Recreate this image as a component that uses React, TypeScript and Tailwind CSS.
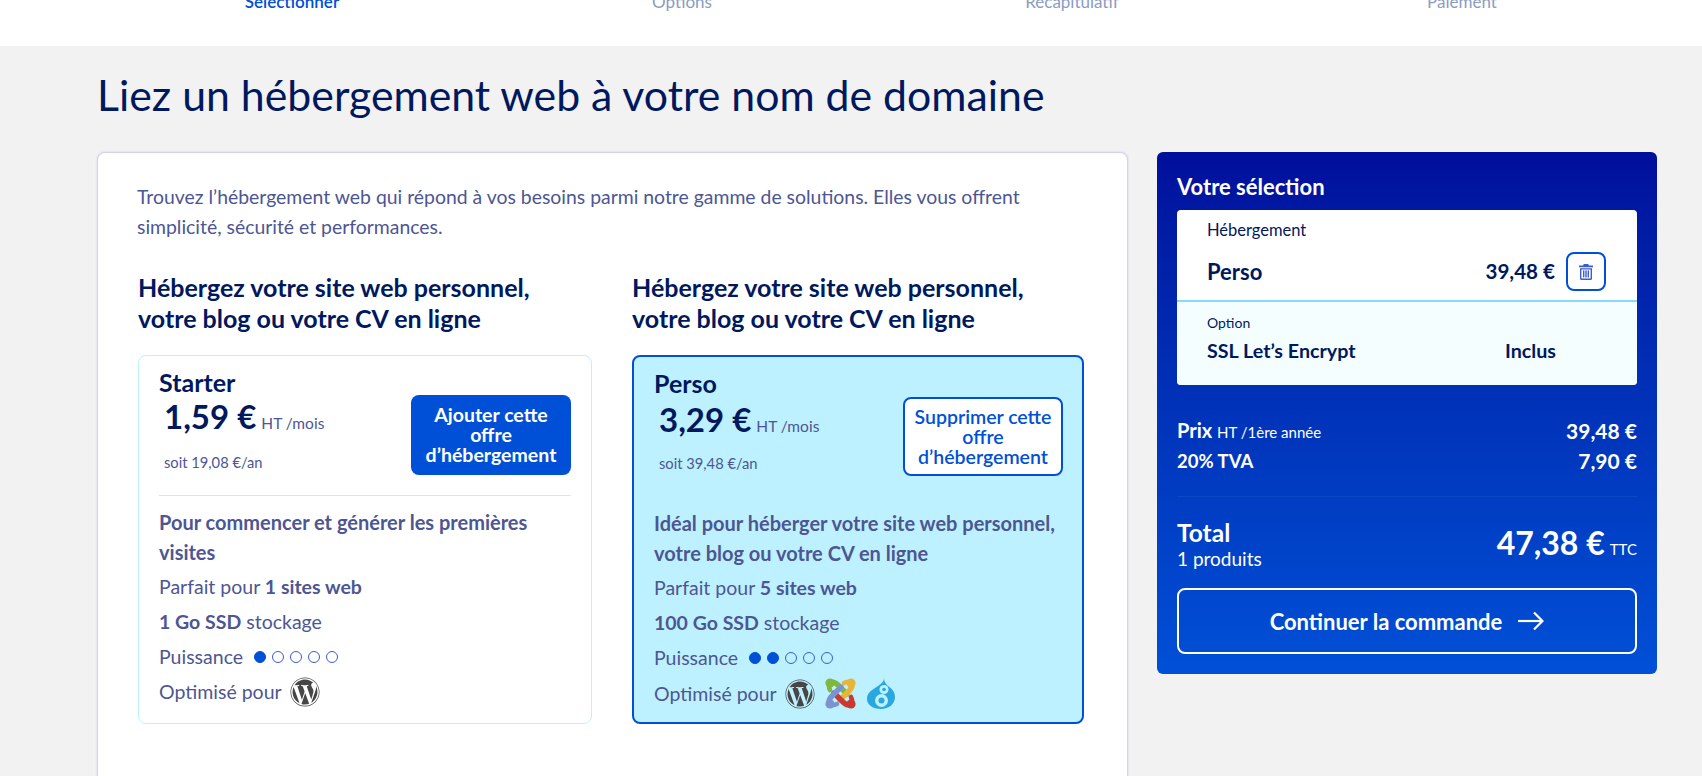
import { FaWordpress } from "react-icons/fa";

const steps = ["Sélectionner", "Options", "Récapitulatif", "Paiement"];

const WordpressIcon = () => (
  <span className="flex h-[30px] w-[30px] items-center justify-center text-[#464646]">
    <FaWordpress size={30} />
  </span>
);

const joomlaColors = ["#7eb93c", "#e8b53c", "#c93a32", "#7b93cf"];

const JoomlaIcon = () => (
  <svg width="31" height="31" viewBox="0 0 31 31" fill="none" strokeLinecap="round">
    {joomlaColors.map((color, index) => (
      <g key={color} transform={`rotate(${index * 90} 15.5 15.5)`}>
        <circle cx="5" cy="5" r="4.6" fill={color} />
        <path d="M5 5 C8 3 11 5 13 7 L22 16" stroke={color} strokeWidth="5.4" />
        <path d="M5 5 C3 8 4 10 5 12" stroke={color} strokeWidth="4.6" />
      </g>
    ))}
  </svg>
);

const DrupalIcon = () => (
  <svg width="30" height="31" viewBox="0 0 30 31">
    <path
      d="M18 0 C18 5 13 7 9 10 C4 13 1 16 1 21 C1 27 7 31 15 31 C23 31 29 26 29 19 C29 13 25 10 22 8 C20 6 18 4 18 0 Z"
      fill="#29a8df"
    />
    <circle cx="15.5" cy="22.5" r="6.5" fill="#bef1ff" />
    <circle cx="15.5" cy="22.5" r="3" fill="#29a8df" />
    <circle cx="18" cy="11.5" r="4.5" fill="#bef1ff" />
    <circle cx="18" cy="11.5" r="1.8" fill="#29a8df" />
  </svg>
);

const TrashIcon = () => (
  <svg width="14" height="16" viewBox="0 0 14 16" fill="#3d5ccf">
    <path d="M4.8 0 H9.2 L10 1.6 H14 V3.2 H0 V1.6 H4 Z" />
    <path d="M1 4.2 H13 V14.5 C13 15.4 12.4 16 11.5 16 H2.5 C1.6 16 1 15.4 1 14.5 Z M2.4 5.6 V14.6 H11.6 V5.6 Z" fillRule="evenodd" />
    <rect x="4" y="6.4" width="1.4" height="7" />
    <rect x="6.3" y="6.4" width="1.4" height="7" />
    <rect x="8.6" y="6.4" width="1.4" height="7" />
  </svg>
);

const LongArrow = () => (
  <svg width="27" height="20" viewBox="0 0 27 20" fill="none" stroke="currentColor" strokeWidth="2.2">
    <path d="M1 10 H25" />
    <path d="M17 1.5 L25.5 10 L17 18.5" />
  </svg>
);

const PowerDots = ({ level }: { level: number }) => (
  <div className="ml-[11px] flex gap-[6px]">
    {[1, 2, 3, 4, 5].map((dot) => (
      <span
        key={dot}
        className={
          dot <= level
            ? "h-3 w-3 rounded-full border border-[#0050d7] bg-[#0050d7]"
            : "h-3 w-3 rounded-full border border-[#3d5ccf] bg-transparent"
        }
      />
    ))}
  </div>
);

interface OfferProps {
  name: string;
  price: string;
  year: string;
  pitch: string;
  sites: string;
  storage: string;
  level: number;
  selected?: boolean;
}

const Offer: React.FC<OfferProps> = ({ name, price, year, pitch, sites, storage, level, selected }) => (
  <div
    className={
      selected
        ? "h-[369px] rounded-lg border-2 border-[#0050d7] bg-[#bef1ff] pl-5 pr-[19px] pt-[14px]"
        : "h-[369px] rounded-lg border border-[#bef1ff] bg-white pl-5 pr-5 pt-[14px]"
    }
  >
    <div className="text-[25px] font-bold leading-6 text-[#00185e]">{name}</div>
    <div className="flex items-start justify-between">
      <div className={selected ? "pl-[5px] pt-1" : "pl-[5px] pt-[2px]"}>
        <div className="flex items-baseline gap-[5px]">
          <span className="text-[33px] font-bold leading-10 text-[#00185e]">{price}</span>
          <span className="text-[15.5px] text-[#4d5693]">HT /mois</span>
        </div>
        <div className={selected ? "mt-[14px] text-[14.7px] leading-5 text-[#4d5693]" : "mt-4 text-[14.7px] leading-5 text-[#4d5693]"}>
          {year}
        </div>
      </div>
      <button
        className={
          selected
            ? "mt-[2px] h-[79px] w-40 rounded-lg border-2 border-[#0050d7] bg-white text-[19.5px] font-semibold leading-5 text-[#0050d7]"
            : "mt-px h-20 w-40 rounded-lg bg-[#0050d7] text-[19.5px] font-bold leading-5 text-white"
        }
      >
        {selected ? "Supprimer cette" : "Ajouter cette"}
        <br />
        offre
        <br />
        d’hébergement
      </button>
    </div>
    <div className={selected ? "mt-5 h-px" : "mt-5 h-px bg-[#bef1ff]"} />
    <div className="mt-[11px] text-[19.5px] leading-[30px] text-[#4d5693]">
      <div className="text-[20px] font-bold">{pitch}</div>
      <div className="mt-[5px]">
        Parfait pour <b>{sites}</b>
      </div>
      <div className="mt-[5px]">
        <b>{storage}</b> stockage
      </div>
      <div className="mt-[5px] flex items-center">
        Puissance
        <PowerDots level={level} />
      </div>
      <div className="mt-[5px] flex items-center">
        Optimisé pour
        <div className="ml-2 flex items-center gap-[10px]">
          <WordpressIcon />
          {selected && <JoomlaIcon />}
          {selected && <DrupalIcon />}
        </div>
      </div>
    </div>
  </div>
);

export default function App() {
  return (
    <div className="h-[776px] overflow-hidden bg-[#f2f2f2] font-['Lato',sans-serif]">
      <div className="flow-root h-[46px] bg-white pl-[97px] pr-[45px]">
        <div className="-mt-2 grid grid-cols-4 text-center text-[17px] leading-5">
          {steps.map((step, index) => (
            <span key={step} className={index === 0 ? "font-semibold text-[#0050d7]" : "text-[#8a9cc2]"}>
              {step}
            </span>
          ))}
        </div>
      </div>

      <div className="pl-[97px] pr-[45px]">
        <h1 className="pt-[19px] text-[42.8px] font-normal leading-[60px] text-[#00185e]">
          Liez un hébergement web à votre nom de domaine
        </h1>

        <div className="mt-[27px] flex items-start gap-[29px]">
          <div className="h-[700px] w-[1031px] shrink-0 rounded-lg border border-[#d4d4ee] bg-white pl-10 pr-[43px] pt-[29px] shadow-[0_0_2px_#c8c8e8]">
            <p className="-ml-px text-[19.4px] leading-[30px] text-[#4d5693]">
              Trouvez l’hébergement web qui répond à vos besoins parmi notre gamme de solutions. Elles vous offrent
              <br />
              simplicité, sécurité et performances.
            </p>
            <div className="mt-[30px] grid grid-cols-[454px_452px] gap-x-10">
              {[0, 1].map((col) => (
                <h2 key={col} className="text-[25px] font-bold leading-[31px] text-[#00185e]">
                  Hébergez votre site web personnel,
                  <br />
                  votre blog ou votre CV en ligne
                </h2>
              ))}
              <div className="mt-[21px]">
                <Offer
                  name="Starter"
                  price="1,59 €"
                  year="soit 19,08 €/an"
                  pitch="Pour commencer et générer les premières visites"
                  sites="1 sites web"
                  storage="1 Go SSD"
                  level={1}
                />
              </div>
              <div className="mt-[21px]">
                <Offer
                  name="Perso"
                  price="3,29 €"
                  year="soit 39,48 €/an"
                  pitch="Idéal pour héberger votre site web personnel, votre blog ou votre CV en ligne"
                  sites="5 sites web"
                  storage="100 Go SSD"
                  level={2}
                  selected
                />
              </div>
            </div>
          </div>

          <aside className="h-[522px] w-[500px] shrink-0 rounded-md bg-gradient-to-b from-[#000e9c] to-[#0050d7] px-5 pt-[21px] text-white">
            <div className="text-[22px] font-bold leading-7">Votre sélection</div>
            <div className="mt-[9px] overflow-hidden rounded bg-white text-[#00185e]">
              <div className="h-[90px] pl-[30px] pr-[31px] pt-2">
                <div className="text-[16.5px] leading-6">Hébergement</div>
                <div className="mt-[10px] flex items-center justify-between">
                  <span className="text-[22px] font-bold">Perso</span>
                  <div className="flex items-center gap-[11px]">
                    <span className="text-[20.6px] font-bold">39,48 €</span>
                    <span className="flex h-[39px] w-10 items-center justify-center rounded-lg border-2 border-[#0050d7]">
                      <TrashIcon />
                    </span>
                  </div>
                </div>
              </div>
              <div className="h-[85px] border-t-2 border-[#85d9fd] bg-[#f5feff] pl-[30px] pr-[81px] pt-[11px]">
                <div className="text-[14px] leading-5">Option</div>
                <div className="mt-[6px] flex justify-between text-[19.7px] font-bold leading-6">
                  <span>SSL Let’s Encrypt</span>
                  <span>Inclus</span>
                </div>
              </div>
            </div>

            <div className="mt-[31px] flex items-center justify-between text-[21px] font-bold leading-7">
              <span className="text-[20px]">
                Prix <span className="text-[15px] font-normal">HT /1ère année</span>
              </span>
              <span>39,48 €</span>
            </div>
            <div className="mt-px flex items-center justify-between text-[21px] font-bold leading-7">
              <span className="text-[18.5px]">20% TVA</span>
              <span>7,90 €</span>
            </div>
            <div className="mt-[21px] h-px bg-[#0a49c4]" />
            <div className="mt-[22px] flex items-center justify-between">
              <div>
                <div className="text-[24.5px] font-bold leading-7">Total</div>
                <div className="text-[19px] leading-6">1 produits</div>
              </div>
              <div className="mb-1 flex items-baseline gap-[5px]">
                <span className="text-[32px] font-bold leading-10">47,38 €</span>
                <span className="text-[15px]">TTC</span>
              </div>
            </div>
            <button className="mt-[17px] flex h-[66px] w-full items-center justify-center gap-[15px] rounded-lg border-2 border-white text-[22px] font-bold">
              Continuer la commande
              <LongArrow />
            </button>
          </aside>
        </div>
      </div>
    </div>
  );
}
